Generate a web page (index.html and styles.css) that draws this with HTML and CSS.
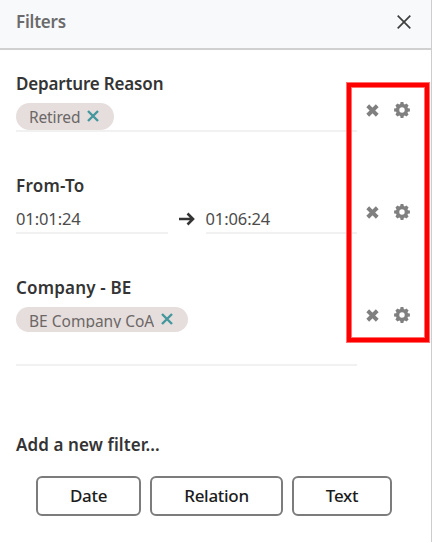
FILE: index.html
```html
<!DOCTYPE html>
<html lang="en">
<head>
<meta charset="utf-8">
<title>Filters</title>
<link rel="stylesheet" href="styles.css">
</head>
<body>
<svg class="sprite" aria-hidden="true">
  <symbol id="times" viewBox="0 0 14 14"><path d="M3.4 3.4 10.6 10.6M10.6 3.4 3.4 10.6" fill="none" stroke="currentColor" stroke-width="4.3" stroke-linecap="square"/></symbol>
  <symbol id="gear" viewBox="0 0 16 16"><path fill="currentColor" fill-rule="evenodd" d="M6.6.1h2.8l.4 2 1 .4 1.7-1.1 2.1 2.1-1.1 1.7.4 1 2 .4v2.8l-2 .4-.4 1 1.1 1.7-2.1 2.1-1.7-1.1-1 .4-.4 2H6.6l-.4-2-1-.4-1.7 1.1-2.1-2.1 1.1-1.7-.4-1-2-.4V6.6l2-.4.4-1-1.1-1.7 2.1-2.1 1.7 1.1 1-.4zM8 5.3a2.7 2.7 0 1 0 0 5.4 2.7 2.7 0 0 0 0-5.4z"/></symbol>
  <symbol id="remove" viewBox="0 0 12 12"><path d="M1 1 11 11M11 1 1 11" fill="none" stroke="currentColor" stroke-width="2.4"/></symbol>
</svg>
<div class="panel">
  <header class="header">
    <h1 class="title">Filters</h1>
    <svg class="close" viewBox="0 0 14 14"><path d="M.7.7 13.3 13.3M13.3.7.7 13.3" fill="none" stroke="currentColor" stroke-width="1.7"/></svg>
  </header>
  <main class="content">
    <section class="filter">
      <div class="field">
        <h2 class="label departure">Departure Reason</h2>
        <div class="tags"><span class="chip"><span class="chip-text retired">Retired</span><svg class="remove"><use href="#remove"/></svg></span></div>
      </div>
      <div class="actions"><svg class="times"><use href="#times"/></svg><svg class="gear"><use href="#gear"/></svg></div>
    </section>
    <section class="filter">
      <div class="field">
        <h2 class="label from">From-To</h2>
        <div class="range">
          <span class="date">01:01:24</span>
          <svg class="arrow" viewBox="0 0 16 14"><path d="M0 7H14M8.5 1.5 14 7 8.5 12.5" fill="none" stroke="currentColor" stroke-width="2.6"/></svg>
          <span class="date">01:06:24</span>
        </div>
      </div>
      <div class="actions"><svg class="times"><use href="#times"/></svg><svg class="gear"><use href="#gear"/></svg></div>
    </section>
    <section class="filter company-row">
      <div class="field">
        <h2 class="label company">Company - BE</h2>
        <div class="tags tall"><span class="chip short"><span class="chip-text clipped">BE Company CoA</span><svg class="remove"><use href="#remove"/></svg></span></div>
      </div>
      <div class="actions"><svg class="times"><use href="#times"/></svg><svg class="gear"><use href="#gear"/></svg></div>
    </section>
    <h2 class="label add">Add a new filter...</h2>
    <div class="buttons">
      <button class="button date-button">Date</button>
      <button class="button relation-button">Relation</button>
      <button class="button text-button">Text</button>
    </div>
  </main>
  <div class="highlight"></div>
</div>
</body>
</html>
```
FILE: styles.css
```css
* { box-sizing: border-box; }
body { margin: 0; background: #fff; font-family: "Noto Sans", "Open Sans", sans-serif; font-size: 16.5px; color: #374151; }
h1, h2 { margin: 0; font-weight: 600; font-size: 17px; }
svg { display: block; flex: none; }
.sprite { position: absolute; width: 0; height: 0; }
.panel { position: relative; width: 432px; height: 542px; border-right: 1px solid #cdcdcd; overflow: hidden; }
.header { display: flex; justify-content: space-between; align-items: center; height: 50px; padding: 0 20px 4px 16px; background: #f8f9fb; border-bottom: 2px solid #d0d0d0; }
.title { color: #6b6b6b; letter-spacing: -0.2px; line-height: 26px; }
.close { width: 14px; height: 14px; color: #3f3f3f; }
.content { padding: 22px 0 0 16px; }
.filter { display: flex; height: 102px; }
.field { width: 341px; }
.label { height: 24px; line-height: 24px; color: #343434; white-space: nowrap; }
.departure { letter-spacing: -0.17px; }
.from { letter-spacing: 0.25px; }
.company { letter-spacing: 0.18px; }
.add { letter-spacing: 0.1px; }
.tags { display: flex; align-items: flex-start; height: 36px; padding-top: 7px; border-bottom: 2px solid #f1f1f1; }
.tags.tall { height: 66px; }
.chip { display: flex; align-items: center; gap: 8px; height: 27px; padding: 0 15px 0 13px; border-radius: 14px; background: #e6dedc; color: #6b6767; }
.chip .remove { margin: 0 0 2px -1px; }
.chip.short { height: 25px; }
.chip-text { height: 24px; line-height: 24px; font-size: 15.5px; white-space: nowrap; }
.retired { letter-spacing: -0.15px; }
.clipped { height: 17px; line-height: 21px; overflow: hidden; letter-spacing: 0; }
.remove { width: 12px; height: 12px; color: #43989d; }
.range { display: flex; align-items: center; height: 36px; }
.date { width: 152px; height: 36px; line-height: 42px; border-bottom: 2px solid #f1f1f1; color: #4c4c4c; letter-spacing: -0.1px; }
.arrow { width: 16px; height: 14px; margin: 6px 11px 0; color: #343434; }
.actions { display: flex; align-items: center; gap: 15px; height: 16px; margin: 30px 0 0 9px; color: #808080; }
.times { width: 13px; height: 13px; }
.gear { width: 16px; height: 16px; }
.company-row { height: 157px; }
.company-row .actions { margin-top: 31px; }
.buttons { display: flex; gap: 9px; margin: 19px 0 0 20px; }
.button { height: 40px; padding: 0; border: 2px solid #7c7c7c; border-radius: 6px; background: #fff; color: #1c1c1c; font: 500 17px/24px "Noto Sans", sans-serif; letter-spacing: -0.3px; white-space: nowrap; }
.date-button { width: 105px; }
.relation-button { width: 133px; }
.text-button { width: 100px; }
.highlight { position: absolute; left: 347px; top: 83px; width: 82px; height: 259px; border: 4px solid #f00; box-shadow: 0 0 0 1px #ff7070, inset 0 0 0 1px #ff7070; }
```
